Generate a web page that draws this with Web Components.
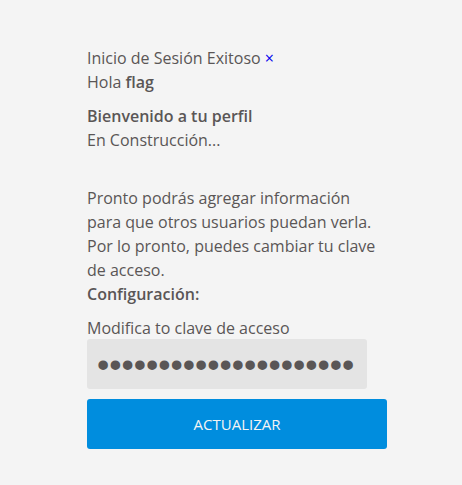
<!DOCTYPE html>
<html lang="es"><head><meta charset="utf-8"><title>Perfil</title>
<style>
body{margin:0;background:#f4f4f4;color:#5a5656;font:16px/24px "Open Sans",sans-serif}
strong{font-weight:600}
</style></head><body>
<profile-page>
<flash-message>Inicio de Sesión Exitoso</flash-message>
<profile-section>
<p>Hola <strong>flag</strong></p>
</profile-section>
<profile-section heading="Bienvenido a tu perfil">
<p>En Construcción...</p>
</profile-section>
<profile-section class="notice">
<p>Pronto podrás agregar información para que otros usuarios puedan verla.</p>
<p>Por lo pronto, puedes cambiar tu clave de acceso.</p>
</profile-section>
<profile-section heading="Configuración:" class="settings">
<password-form></password-form>
</profile-section>
</profile-page>
<script>
const define=(name,html,setup)=>customElements.define(name,class extends HTMLElement{
  constructor(){super();this.attachShadow({mode:'open'}).innerHTML=html;}
  connectedCallback(){setup?.(this,this.shadowRoot);}
});
define('profile-page',`<style>
:host{display:block;max-width:300px;margin:0 auto;padding:46px 0 36px 12px}
main{display:flex;flex-direction:column}
</style><main><slot></slot></main>`);
define('flash-message',`<style>
:host{display:block}a{color:#0000ee;text-decoration:none}
</style><span><slot></slot></span> <a href="#" aria-label="Cerrar">×</a>`,
(host,root)=>root.querySelector('a').onclick=e=>{e.preventDefault();host.remove();});
define('profile-section',`<style>
:host{display:block;margin-bottom:10px}
:host(.notice){margin-top:24px;margin-bottom:0}
:host(.settings){margin-bottom:0}
h2{font-size:16px;line-height:24px;font-weight:600;margin:0}
h2[hidden]{display:none}
:host(.settings) h2{margin-bottom:11px}
::slotted(p){margin:0}
</style><section><h2 hidden></h2><slot></slot></section>`,
(host,root)=>{const t=host.getAttribute('heading'),h=root.querySelector('h2');if(t){h.textContent=t;h.hidden=false;}});
define('password-form',`<style>
:host{display:block}
form{display:flex;flex-direction:column}
label{line-height:22px}
input{box-sizing:border-box;width:calc(100% - 20px);height:50px;border:0;border-radius:3px;padding:2px 10px 0;margin:0 0 10px;background:#e4e4e4;color:#5a5656;font:35px "Liberation Sans",sans-serif;outline:0}
button{height:50px;border:0;border-radius:3px;background:#008dde;color:#f4f4f4;font:15px "Open Sans",sans-serif;text-transform:uppercase;cursor:pointer}
</style><form><label for="pw">Modifica to clave de acceso</label>
<input id="pw" type="password" value="123456789012345678901"><button type="button">Actualizar</button></form>`);
</script></body></html>
